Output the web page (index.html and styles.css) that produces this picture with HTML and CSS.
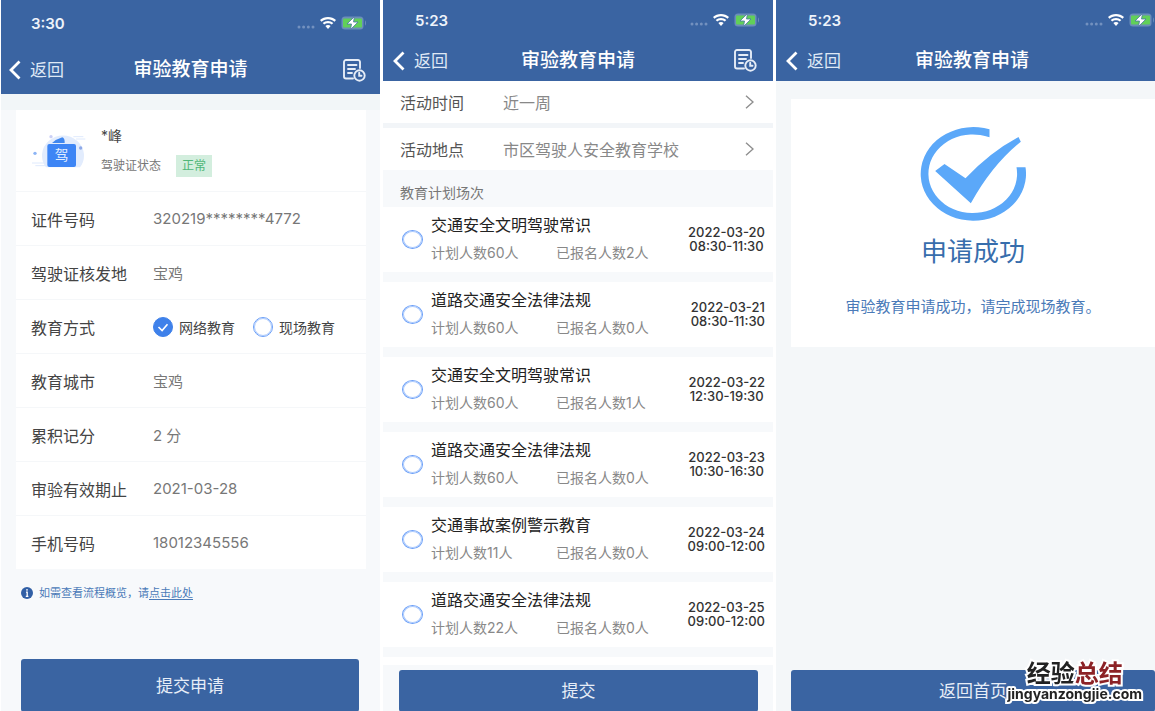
FILE: index.html
```html
<!DOCTYPE html>
<html lang="zh-CN">
<head>
    <meta charset="UTF-8">
    <meta name="viewport" content="width=device-width, initial-scale=1.0">
    <title>审验教育申请</title>
    <link rel="stylesheet" href="styles.css">
</head>
<body>

    <!-- shared icons -->
    <svg class="sprite" aria-hidden="true">
        <symbol id="i-dots" viewBox="0 0 18 4">
            <circle cx="2" cy="2" r="1.5"/><circle cx="6.6" cy="2" r="1.5"/><circle cx="11.3" cy="2" r="1.5"/><circle cx="16" cy="2" r="1.5"/>
        </symbol>
        <symbol id="i-wifi" viewBox="0 0 16 12">
            <path d="M8 0C4.9 0 2.1 1.2 0 3.1l1.5 1.6C3.2 3.1 5.5 2.2 8 2.2s4.8.9 6.5 2.5L16 3.1C13.900 1.200 11.100 0 8 0z"/>
            <path d="M8 4C6 4 4.100 4.800 2.700 6l1.500 1.600C5.200 6.700 6.500 6.200 8 6.200s2.800.5 3.800 1.400L13.300 6C11.900 4.800 10 4 8 4z"/>
            <path d="M8 8c-1 0-1.900.4-2.600 1L8 12l2.600-3C9.900 8.400 9 8 8 8z"/>
        </symbol>
        <symbol id="i-battery" viewBox="0 0 26 14">
            <rect x="0.5" y="0.5" width="22" height="13" rx="3.5" fill="#6b8dba"/>
            <path d="M24 4.500c1.300.4 1.300 4.600 0 5z" fill="#6b8dba"/>
            <rect x="2" y="2.5" width="19" height="9" rx="1" fill="#61d058"/>
            <path d="M13.500 0.500L6 8h4.500L9.500 13.500L17 6h-4.500z" fill="#fff" stroke="#4a76a5" stroke-width=".8"/>
        </symbol>
        <symbol id="i-back" viewBox="0 0 12 20">
            <path d="M10.500 1.500L2 10l8.500 8.500" fill="none" stroke="#fff" stroke-width="2.800"/>
        </symbol>
        <symbol id="i-record" viewBox="0 0 23 23">
            <g fill="none" stroke="#e6edf7" stroke-width="1.900" stroke-linecap="round">
                <path d="M17 9V3a2 2 0 0 0-2-2H3a2 2 0 0 0-2 2v14.500a2 2 0 0 0 2 2h7"/>
                <path d="M5 6h8.500M5 10h7M5 14h4"/>
                <circle cx="16.500" cy="16.500" r="5.200"/>
                <path d="M16.200 13.800v3h2.300"/>
            </g>
        </symbol>
        <symbol id="i-next" viewBox="0 0 9 14">
            <path d="M1 .8L8 7l-7 6.200" fill="none" stroke="#8e8e8e" stroke-width="1.400"/>
        </symbol>
    </svg>

    <main class="screens">

        <!-- 申请表 -->
        <section class="screen screen-form">
            <header class="topbar topbar-tall">
                <div class="status">
                    <span class="time">3:30</span>
                    <svg class="dots"><use href="#i-dots"/></svg>
                    <svg class="wifi"><use href="#i-wifi"/></svg>
                    <svg class="battery"><use href="#i-battery"/></svg>
                </div>
                <nav class="nav">
                    <a href="#" class="back"><svg><use href="#i-back"/></svg>返回</a>
                    <h1>审验教育申请</h1>
                    <button type="button" class="record" aria-label="申请记录"><svg><use href="#i-record"/></svg></button>
                </nav>
            </header>

            <form class="apply">
                <div class="card">
                    <div class="person">
                        <svg class="licence" viewBox="30 30 180 114" aria-hidden="true">
                            <path d="M78 136a63 60 0 1 1 102 0z" fill="#e2ecfd"/>
                            <path d="M36 123h52M46 131h40M160 44h30M168 51h28" stroke="#dfeafd" stroke-width="3"/>
                            <path d="M96 63q14-12 31-17q8 4 7 17z" fill="#3f87ef"/>
                            <rect x="82" y="66" width="86" height="69" rx="6" fill="#3d85f5"/>
                            <circle cx="93" cy="44" r="5" fill="#cbd0f6"/>
                            <circle cx="45" cy="94" r="5" fill="#8db5f5"/>
                            <circle cx="182" cy="78" r="5" fill="#8ea9e8"/>
                            <text x="125" y="115" text-anchor="middle" font-size="41" fill="#e4efff">驾</text>
                        </svg>
                        <div class="person-info">
                            <div class="name">*峰</div>
                            <div class="state">驾驶证状态 <span class="tag">正常</span></div>
                        </div>
                    </div>
                    <div class="field"><span class="label">证件号码</span><span class="value">320219********4772</span></div>
                    <div class="field"><span class="label">驾驶证核发地</span><span class="value">宝鸡</span></div>
                    <div class="field" role="radiogroup" aria-label="教育方式">
                        <span class="label">教育方式</span>
                        <label class="choice"><input type="radio" name="mode" checked>网络教育</label>
                        <label class="choice"><input type="radio" name="mode">现场教育</label>
                    </div>
                    <div class="field"><span class="label">教育城市</span><span class="value">宝鸡</span></div>
                    <div class="field"><span class="label">累积记分</span><span class="value">2 分</span></div>
                    <div class="field"><span class="label">审验有效期止</span><span class="value">2021-03-28</span></div>
                    <div class="field"><span class="label">手机号码</span><span class="value">18012345556</span></div>
                </div>
                <p class="tip">
                    <svg viewBox="0 0 12 12" aria-hidden="true">
                        <circle cx="6" cy="6" r="6" fill="#315fa5"/>
                        <path d="M6 2v1.800M5 5.200h1.200v4M4.800 9.300h2.600" stroke="#fff" stroke-width="1.300" fill="none"/>
                    </svg>
                    <span>如需查看流程概览，请<a href="#">点击此处</a></span>
                </p>
                <button type="button" class="submit">提交申请</button>
            </form>
        </section>

        <!-- 场次选择 -->
        <section class="screen screen-plan">
            <header class="topbar">
                <div class="status">
                    <span class="time">5:23</span>
                    <svg class="dots"><use href="#i-dots"/></svg>
                    <svg class="wifi"><use href="#i-wifi"/></svg>
                    <svg class="battery"><use href="#i-battery"/></svg>
                </div>
                <nav class="nav">
                    <a href="#" class="back"><svg><use href="#i-back"/></svg>返回</a>
                    <h1>审验教育申请</h1>
                    <button type="button" class="record" aria-label="申请记录"><svg><use href="#i-record"/></svg></button>
                </nav>
            </header>

            <div class="filters">
                <button type="button" class="filter"><span class="label">活动时间</span><span class="value">近一周</span><svg><use href="#i-next"/></svg></button>
                <button type="button" class="filter"><span class="label">活动地点</span><span class="value">市区驾驶人安全教育学校</span><svg><use href="#i-next"/></svg></button>
            </div>

            <h2>教育计划场次</h2>

            <div class="plans">
                <label class="plan">
                    <input type="radio" name="plan">
                    <span class="plan-title">交通安全文明驾驶常识</span>
                    <span class="plan-count"><span>计划人数60人</span><span>已报名人数2人</span></span>
                    <span class="plan-date">2022-03-20<br>08:30-11:30</span>
                </label>
                <label class="plan">
                    <input type="radio" name="plan">
                    <span class="plan-title">道路交通安全法律法规</span>
                    <span class="plan-count"><span>计划人数60人</span><span>已报名人数0人</span></span>
                    <span class="plan-date">2022-03-21<br>08:30-11:30</span>
                </label>
                <label class="plan">
                    <input type="radio" name="plan">
                    <span class="plan-title">交通安全文明驾驶常识</span>
                    <span class="plan-count"><span>计划人数60人</span><span>已报名人数1人</span></span>
                    <span class="plan-date">2022-03-22<br>12:30-19:30</span>
                </label>
                <label class="plan">
                    <input type="radio" name="plan">
                    <span class="plan-title">道路交通安全法律法规</span>
                    <span class="plan-count"><span>计划人数60人</span><span>已报名人数0人</span></span>
                    <span class="plan-date">2022-03-23<br>10:30-16:30</span>
                </label>
                <label class="plan">
                    <input type="radio" name="plan">
                    <span class="plan-title">交通事故案例警示教育</span>
                    <span class="plan-count"><span>计划人数11人</span><span>已报名人数0人</span></span>
                    <span class="plan-date">2022-03-24<br>09:00-12:00</span>
                </label>
                <label class="plan">
                    <input type="radio" name="plan">
                    <span class="plan-title">道路交通安全法律法规</span>
                    <span class="plan-count"><span>计划人数22人</span><span>已报名人数0人</span></span>
                    <span class="plan-date">2022-03-25<br>09:00-12:00</span>
                </label>
                <div class="plan-more"></div>
            </div>

            <div class="footer">
                <button type="button" class="submit">提交</button>
            </div>
        </section>

        <!-- 申请成功 -->
        <section class="screen screen-done">
            <header class="topbar">
                <div class="status">
                    <span class="time">5:23</span>
                    <svg class="dots"><use href="#i-dots"/></svg>
                    <svg class="wifi"><use href="#i-wifi"/></svg>
                    <svg class="battery"><use href="#i-battery"/></svg>
                </div>
                <nav class="nav">
                    <a href="#" class="back"><svg><use href="#i-back"/></svg>返回</a>
                    <h1>审验教育申请</h1>
                </nav>
            </header>

            <div class="result">
                <svg viewBox="453 382 317 282" aria-hidden="true">
                    <path d="M661 389A158 140.500 0 1 0 769 503H742A133 118 0 1 1 661 413z"/>
                    <path d="M498 514L526 493L589 536Q662 458 748 412L755 426Q668 496 605 611z"/>
                </svg>
                <h2>申请成功</h2>
                <p>审验教育申请成功，请完成现场教育。</p>
            </div>

            <div class="footer">
                <button type="button" class="submit">返回首页</button>
            </div>
        </section>
    </main>

    <div class="watermark">
        <div class="watermark-name">经验<span>总结</span></div>
        <div class="watermark-site">jingyanzongjie.com</div>
    </div>

</body>
</html>
```
FILE: styles.css
```css
* {
    box-sizing: border-box;
}

body {
    margin: 0;
    background-color: #fff;
    color: #444;
    font-family: Inter, 'Noto Sans CJK SC', sans-serif;
    overflow: hidden;
}

h1, h2, p {
    margin: 0;
    font-weight: 400;
}

button {
    margin: 0;
    padding: 0;
    border: 0;
    background: none;
    color: inherit;
    font-family: inherit;
    cursor: pointer;
}

.sprite {
    display: none;
}

/* the last screen runs past the right edge */
.screens {
    display: grid;
    grid-template-columns: 379fr 390fr 392fr;
    gap: 3px;
    min-height: 100vh;
    margin-left: 1px;
    margin-right: -13px;
}

.screen {
    display: flex;
    flex-direction: column;
    background-color: #f7f9fb;
}

/* --- top bar --- */
.topbar {
    background-color: #3a64a2;
    color: #fff;
}

.status {
    display: flex;
    align-items: center;
    height: 40px;
    padding: 0 13px 0 32px;
}

.time {
    margin-right: auto;
    font-size: 15px;
    font-weight: 600;
    color: #eef3fa;
}

.dots {
    width: 18px;
    height: 4px;
    margin: 7px 5px 0 0;
    fill: #7391bf;
}

.wifi {
    width: 16px;
    height: 12px;
    margin-right: 5px;
    fill: #fff;
}

.battery {
    width: 26px;
    height: 14px;
}

.nav {
    display: grid;
    grid-template-columns: 1fr auto 1fr;
    align-items: center;
    height: 41px;
    padding: 0 10px;
}

.topbar-tall .status {
    height: 46px;
    padding-left: 30px;
}

.topbar-tall .nav {
    height: 48px;
    padding: 0 8px;
}

.nav h1 {
    font-size: 19px;
    line-height: 24px;
    font-weight: 500;
}

.back {
    display: flex;
    align-items: center;
    gap: 9px;
    color: #dfe8f5;
    font-size: 17px;
    line-height: 24px;
    text-decoration: none;
}

.back svg {
    width: 12px;
    height: 20px;
}

.record {
    justify-self: end;
    height: 23px;
    margin-right: 6px;
}

.record svg {
    display: block;
    width: 23px;
    height: 23px;
}

/* --- radio --- */
input[type="radio"] {
    appearance: none;
    flex: none;
    width: 20px;
    height: 20px;
    margin: 0;
    border: 1px solid #6b9ff8;
    outline: 1px solid #a9c8fc;
    outline-offset: -2px;
    border-radius: 50%;
    background-color: #fff;
}

input[type="radio"]:checked {
    border-color: #3f81ea;
    outline: 0;
    background: #3f81ea url("data:image/svg+xml,%3Csvg xmlns='http://www.w3.org/2000/svg' viewBox='0 0 20 20'%3E%3Cpath d='M5 10l4 4 6-7' fill='none' stroke='white' stroke-width='1.800'/%3E%3C/svg%3E") center / 100% no-repeat;
}

/* --- application form --- */
.apply {
    flex: 1;
    display: flex;
    flex-direction: column;
    padding: 16px 14px 0 15px;
}

.screen-form {
    background-image: linear-gradient(#f2f6f8, #f2f6f8);
    background-size: 100% 110px;
    background-repeat: no-repeat;
}

.card {
    background-color: #fff;
}

.person {
    display: flex;
    align-items: center;
    gap: 11px;
    height: 81px;
    padding-left: 14px;
}

.licence {
    width: 60px;
    height: 38px;
}

.person-info {
    display: grid;
    gap: 8px;
    font-size: 12px;
    line-height: 22px;
    color: #777;
}

.name {
    font-size: 14px;
    color: #444;
}

.state {
    display: flex;
    gap: 15px;
}

.tag {
    padding: 0 6px;
    background-color: #d3eede;
    color: #4fb777;
}

.field {
    display: flex;
    align-items: center;
    height: 54px;
    padding-left: 15px;
    border-top: 1px solid #f5f7f9;
    font-size: 15px;
}

.field .label {
    width: 122px;
    font-size: 16px;
}

.field .value {
    color: #777;
}

.choice {
    display: flex;
    align-items: center;
    gap: 6px;
    margin-right: 18px;
    font-size: 14px;
}

.tip {
    display: flex;
    align-items: center;
    gap: 6px;
    padding: 15px 5px;
    color: #4a7ab8;
    font-size: 11px;
    line-height: 18px;
}

.tip svg {
    width: 12px;
    height: 12px;
}

.tip a {
    color: inherit;
    text-underline-offset: 2px;
}

.submit {
    width: 100%;
    height: 42px;
    padding-bottom: 3px;
    border-radius: 3px;
    background-color: #3a64a2;
    color: #e6edf7;
    font-size: 17px;
}

.apply .submit {
    width: auto;
    height: 53px;
    margin: auto 7px 0 5px;
}

/* --- plan list --- */
.filters {
    display: grid;
    gap: 5px;
    background-color: #f2f5f8;
}

.filter {
    display: flex;
    align-items: center;
    height: 42px;
    padding: 0 19px 0 17px;
    background-color: #fff;
    font-size: 16px;
    text-align: left;
}

.filter .label {
    width: 103px;
    color: #555;
}

.filter .value {
    flex: 1;
    color: #888;
}

.filter svg {
    width: 9px;
    height: 14px;
}

.screen-plan h2 {
    padding: 13px 17px 4px;
    color: #777;
    font-size: 14px;
    line-height: 20px;
}

.plans {
    display: grid;
    gap: 10px;
}

.plan {
    display: grid;
    grid-template-columns: 29px 1fr auto;
    grid-template-rows: 28px 28px;
    align-items: center;
    padding: 4px 8px 5px 19px;
    background-color: #fff;
}

.plan input {
    grid-row: 1 / 3;
    width: 21px;
    height: 19px;
}

.plan-title {
    color: #222;
    font-size: 16px;
    line-height: 24px;
}

.plan-count {
    grid-column: 2;
    grid-row: 2;
    display: grid;
    grid-template-columns: 125px 1fr;
    color: #888;
    font-size: 14px;
    line-height: 20px;
}

.plan-date {
    grid-column: 3;
    grid-row: 1 / 3;
    color: #333;
    font-size: 13px;
    font-weight: 500;
    line-height: 14px;
    text-align: center;
}

.plan-more {
    height: 8px;
    background-color: #fff;
}

.footer {
    margin-top: auto;
    padding: 5px 15px 0 16px;
}

/* --- result --- */
.screen-done {
    background-color: #f4f7f9;
}

.result {
    display: flex;
    flex-direction: column;
    align-items: center;
    margin: 18px 13px 0 15px;
    padding: 28px 0 28px;
    background-color: #fff;
}

.result svg {
    width: 106px;
    height: 94px;
    fill: #5ba8f9;
}

.result h2 {
    margin-top: 13px;
    color: #376dac;
    font-size: 26px;
    line-height: 36px;
}

.result p {
    margin-top: 25px;
    color: #4a7ab8;
    font-size: 15px;
    line-height: 24px;
}

.screen-done .footer {
    padding: 0 13px 0 15px;
}

/* --- watermark --- */
.watermark {
    position: fixed;
    right: 13px;
    bottom: 9px;
    text-align: center;
    color: #222;
    font-weight: 700;
    -webkit-text-stroke: 4px #fff;
    paint-order: stroke fill;
    pointer-events: none;
}

.watermark-name {
    font-size: 24px;
    line-height: 24px;
}

.watermark-name span {
    color: #8c2226;
}

.watermark-site {
    font-size: 14px;
    line-height: 16px;
}
```
